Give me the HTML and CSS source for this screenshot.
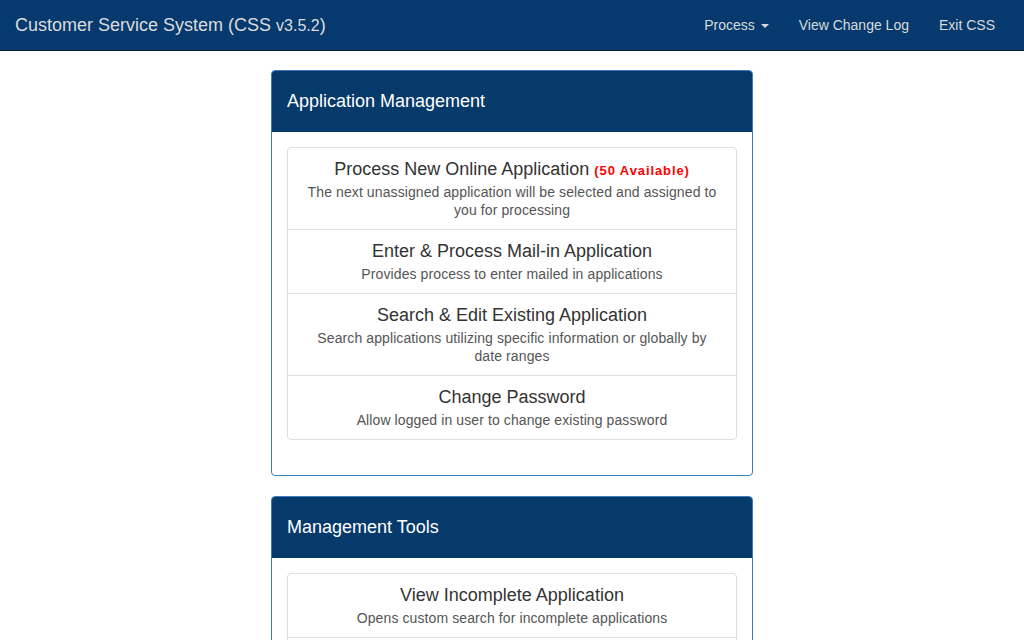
FILE: index.html
```html
<!DOCTYPE html>
<html lang="en">
<head>
<meta charset="utf-8">
<title>Customer Service System</title>
<link rel="stylesheet" href="styles.css">
</head>
<body>
<nav class="navbar">
  <a class="brand" href="#">Customer Service System (CSS <span class="ver">v3.5.2</span>)</a>
  <ul class="nav">
    <li><a href="#">Process <span class="caret"></span></a></li>
    <li><a href="#">View Change Log</a></li>
    <li><a href="#">Exit CSS</a></li>
  </ul>
</nav>
<main class="main">
  <section class="panel">
    <div class="panel-heading"><h3 class="panel-title">Application Management</h3></div>
    <div class="panel-body">
      <div class="list-group">
        <a class="item" href="#">
          <h4 class="item-heading">Process New Online Application <span class="avail">(50 Available)</span></h4>
          <p class="item-text">The next unassigned application will be selected and assigned to you for processing</p>
        </a>
        <a class="item" href="#">
          <h4 class="item-heading">Enter &amp; Process Mail-in Application</h4>
          <p class="item-text">Provides process to enter mailed in applications</p>
        </a>
        <a class="item" href="#">
          <h4 class="item-heading">Search &amp; Edit Existing Application</h4>
          <p class="item-text">Search applications utilizing specific information or globally by date ranges</p>
        </a>
        <a class="item" href="#">
          <h4 class="item-heading">Change Password</h4>
          <p class="item-text">Allow logged in user to change existing password</p>
        </a>
      </div>
    </div>
  </section>
  <section class="panel">
    <div class="panel-heading"><h3 class="panel-title">Management Tools</h3></div>
    <div class="panel-body">
      <div class="list-group">
        <a class="item" href="#">
          <h4 class="item-heading">View Incomplete Application</h4>
          <p class="item-text">Opens custom search for incomplete applications</p>
        </a>
        <a class="item" href="#">
          <h4 class="item-heading">Manage Users</h4>
          <p class="item-text">Add, edit and disable system user accounts</p>
        </a>
      </div>
    </div>
  </section>
</main>
</body>
</html>
```
FILE: styles.css
```css
html, body {
  margin: 0;
  padding: 0;
  overflow: hidden;
}
body {
  font-family: "Liberation Sans", Arial, Helvetica, sans-serif;
  font-size: 14px;
  line-height: 1.42857;
  color: #333;
  background: #fff;
}
a { text-decoration: none; }

.navbar {
  height: 50px;
  background: #063a6f;
  border-bottom: 1px solid #0b1826;
  display: flex;
  align-items: center;
  justify-content: space-between;
  padding: 0 14px 0 15px;
}
.brand {
  font-size: 18px;
  line-height: 20px;
  color: #dcdcdc;
}
.brand .ver { font-size: 16px; }
.nav {
  list-style: none;
  margin: 0;
  padding: 0;
  display: flex;
}
.nav a {
  display: block;
  padding: 15px;
  line-height: 20px;
  color: #d9d9d9;
}
.caret {
  display: inline-block;
  width: 0;
  height: 0;
  margin-left: 2px;
  vertical-align: middle;
  border-top: 4px solid #d9d9d9;
  border-left: 4px solid transparent;
  border-right: 4px solid transparent;
}

.main {
  width: 482px;
  margin: 19px auto 0;
}
.panel {
  border: 1px solid #3a7cbf;
  border-radius: 4px;
  margin-bottom: 20px;
  background: #fff;
}
.panel-heading {
  background: #063a6b;
  padding: 20px 15px 21px;
  border-radius: 3px 3px 0 0;
}
.panel-title {
  margin: 0;
  font-size: 18px;
  font-weight: normal;
  line-height: 20px;
  color: #fff;
}
.panel-body {
  padding: 15px;
}
.list-group {
  margin-bottom: 20px;
  display: flex;
  flex-direction: column;
}
.item {
  display: block;
  padding: 10px 15px;
  border: 1px solid #ddd;
  margin-bottom: -1px;
  text-align: center;
  color: #555;
  background: #fff;
}
.item:first-child { border-radius: 4px 4px 0 0; }
.item:last-child { border-radius: 0 0 4px 4px; margin-bottom: 0; }
.item-heading {
  margin: 0 0 3px;
  font-size: 18px;
  font-weight: normal;
  line-height: 22px;
  color: #333;
}
.avail {
  color: #f00;
  font-size: 13px;
  font-weight: bold;
  line-height: 1;
  letter-spacing: 0.9px;
}
.item-text {
  margin: 0;
  line-height: 18px;
  letter-spacing: 0.1px;
  color: #555;
}
```
